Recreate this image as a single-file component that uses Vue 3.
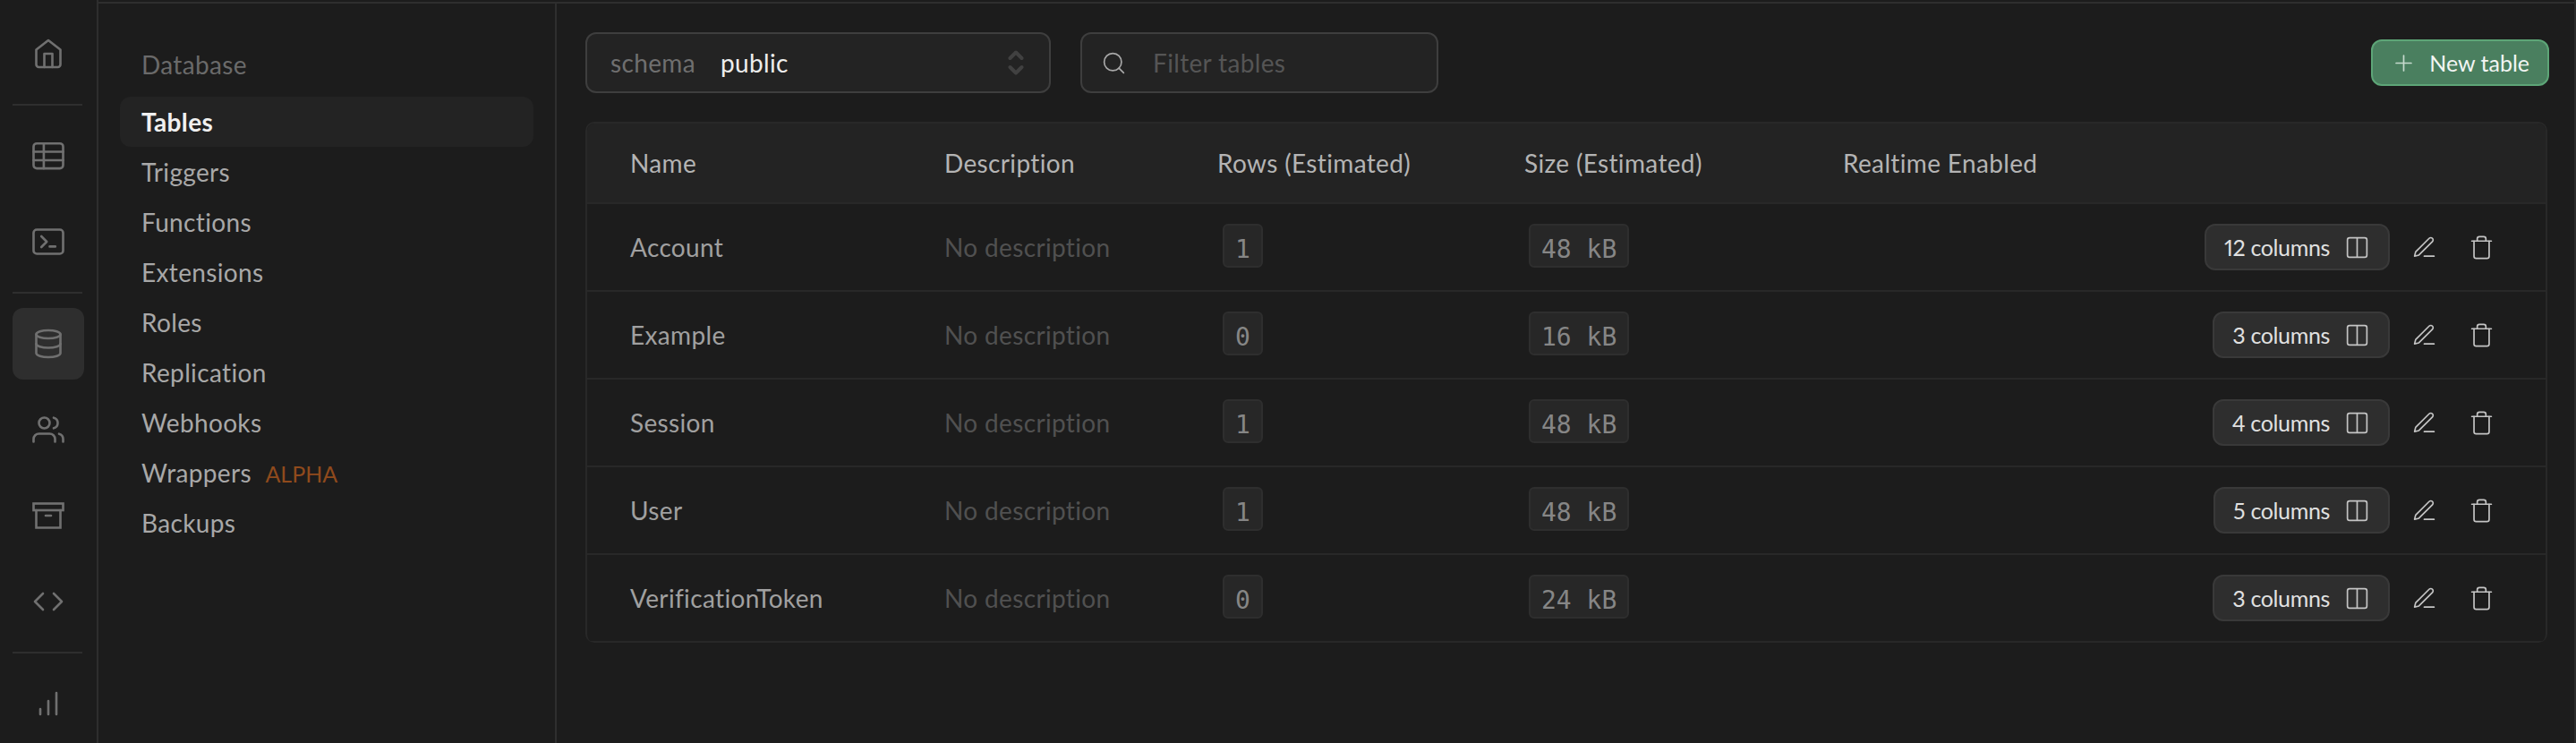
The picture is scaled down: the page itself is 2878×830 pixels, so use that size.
<script setup>
const menu = ["Triggers", "Functions", "Extensions", "Roles", "Replication", "Webhooks"]

const tables = [
  { name: "Account", rows: "1", size: "48 kB", columns: "12 columns" },
  { name: "Example", rows: "0", size: "16 kB", columns: "3 columns" },
  { name: "Session", rows: "1", size: "48 kB", columns: "4 columns" },
  { name: "User", rows: "1", size: "48 kB", columns: "5 columns" },
  { name: "VerificationToken", rows: "0", size: "24 kB", columns: "3 columns" }
]
</script>

<template>
  <div class="page">
    <nav class="rail">
      <a class="rail-item">
        <svg viewBox="0 0 24 24"><path d="M3 9l9-7 9 7v11a2 2 0 0 1-2 2H5a2 2 0 0 1-2-2z" /><path d="M9 22V12h6v10" /></svg>
      </a>
      <div class="rail-line"></div>
      <a class="rail-item">
        <svg viewBox="0 0 24 24"><rect x="1" y="2.8" width="22" height="18.6" rx="2.4" /><path d="M1 9h22M1 15.3h22M8.6 2.8v18.6" /></svg>
      </a>
      <a class="rail-item">
        <svg viewBox="0 0 24 24"><rect x="1" y="3" width="22" height="18" rx="2.4" /><path d="M6.8 8l4 4-4 4M13 15.6h4.2" /></svg>
      </a>
      <div class="rail-line"></div>
      <a class="rail-item active">
        <svg viewBox="0 0 24 24"><ellipse cx="12" cy="5" rx="9" ry="3" /><path d="M21 12c0 1.66-4 3-9 3s-9-1.34-9-3" /><path d="M3 5v14c0 1.66 4 3 9 3s9-1.34 9-3V5" /></svg>
      </a>
      <a class="rail-item">
        <svg viewBox="0 0 24 24"><path d="M17 21v-2a4 4 0 0 0-4-4H5a4 4 0 0 0-4 4v2" /><circle cx="9" cy="7" r="4" /><path d="M23 21v-2a4 4 0 0 0-3-3.87" /><path d="M16 3.13a4 4 0 0 1 0 7.75" /></svg>
      </a>
      <a class="rail-item">
        <svg class="sharp" viewBox="0 0 24 24"><path d="M21 8v13H3V8" /><rect x="1" y="3" width="22" height="5" /><path d="M10 12h4" /></svg>
      </a>
      <a class="rail-item">
        <svg viewBox="0 0 24 24"><path d="M16 18l6-6-6-6" /><path d="M8 6l-6 6 6 6" /></svg>
      </a>
      <div class="rail-line"></div>
      <a class="rail-item">
        <svg viewBox="0 0 24 24"><path d="M12 20V10M18 20V4M6 20v-4" /></svg>
      </a>
    </nav>

    <div class="content">
      <aside class="sidebar">
        <div class="side-title">Database</div>
        <a class="side-item current">Tables</a>
        <a v-for="item in menu" :key="item" class="side-item">{{ item }}</a>
        <a class="side-item">Wrappers <span class="alpha">ALPHA</span></a>
        <a class="side-item">Backups</a>
      </aside>

      <main class="main">
        <div class="toolbar">
          <div class="select">
            <span class="select-label">schema</span>
            <span class="select-value">public</span>
            <svg class="chevrons" viewBox="0 0 18 30"><path d="M2.5 10l6.5-6.5 6.5 6.5M2.5 20l6.5 6.5 6.5-6.5" /></svg>
          </div>
          <div class="filter">
            <svg class="icon search" viewBox="0 0 24 24"><circle cx="11" cy="11" r="8" /><path d="M21 21l-4.35-4.35" /></svg>
            <span>Filter tables</span>
          </div>
          <button class="new-table">
            <svg class="icon" viewBox="0 0 24 24"><path d="M12 5v14M5 12h14" /></svg>
            New table
          </button>
        </div>

        <div class="table">
          <div class="row head">
            <div>Name</div>
            <div>Description</div>
            <div>Rows (Estimated)</div>
            <div>Size (Estimated)</div>
            <div>Realtime Enabled</div>
            <div></div>
          </div>
          <div v-for="t in tables" :key="t.name" class="row">
            <div class="name">{{ t.name }}</div>
            <div class="desc">No description</div>
            <div class="rows-cell"><code class="badge">{{ t.rows }}</code></div>
            <div><code class="badge">{{ t.size }}</code></div>
            <div></div>
            <div class="actions">
              <button class="columns">
                {{ t.columns }}
                <svg class="icon" viewBox="0 0 24 24"><path d="M12 3h7a2 2 0 0 1 2 2v14a2 2 0 0 1-2 2h-7m0-18H5a2 2 0 0 0-2 2v14a2 2 0 0 0 2 2h7m0-18v18" /></svg>
              </button>
              <button class="icon-btn">
                <svg class="icon" viewBox="0 0 24 24"><path d="M12 20h9" /><path d="M16.5 3.5a2.121 2.121 0 0 1 3 3L7 19l-4 1 1-4L16.5 3.5z" /></svg>
              </button>
              <button class="icon-btn">
                <svg class="icon" viewBox="0 0 24 24"><path d="M3 6h18" /><path d="M19 6v14a2 2 0 0 1-2 2H7a2 2 0 0 1-2-2V6m3 0V4a2 2 0 0 1 2-2h4a2 2 0 0 1 2 2v2" /></svg>
              </button>
            </div>
          </div>
        </div>
      </main>
    </div>
  </div>
</template>

<style>
body {
  background: #1c1c1c;
}
</style>

<style scoped>
.page {
  display: flex;
  width: 2878px;
  height: 830px;
  overflow: hidden;
  background: #1c1c1c;
  font-family: Lato, "Open Sans", sans-serif;
  font-size: 28px;
  letter-spacing: 0.35px;
  font-variant-numeric: proportional-nums;
  color: #a8a8a8;
  box-sizing: border-box;
  border-right: 2px solid #2b2b2b;
}

.rail {
  flex: none;
  display: flex;
  flex-direction: column;
  align-items: flex-start;
  width: 94px;
  padding: 20px 0 0 14px;
  border-right: 2px solid #2e2e2e;
}

.rail-item {
  flex: none;
  display: flex;
  align-items: center;
  justify-content: center;
  width: 80px;
  height: 80px;
  border-radius: 12px;
  margin-bottom: 16px;
}

.rail-item.active {
  background: #2e2e2e;
}

.rail-item svg {
  width: 36px;
  height: 36px;
  fill: none;
  stroke: #707070;
  stroke-width: 1.75;
  stroke-linecap: round;
  stroke-linejoin: round;
}

.rail-item svg.sharp {
  stroke-linejoin: miter;
}

.rail-line {
  flex: none;
  width: 78px;
  height: 2px;
  margin-bottom: 16px;
  background: #2e2e2e;
}

.content {
  flex: 1;
  display: flex;
  margin-top: 2px;
  border-top: 2px solid #2e2e2e;
  min-width: 0;
}

.sidebar {
  flex: none;
  width: 512px;
  padding: 41px 0 0 24px;
  box-sizing: border-box;
  border-right: 2px solid #2e2e2e;
}

.side-title {
  height: 56px;
  line-height: 54px;
  margin-bottom: 7px;
  padding-left: 24px;
  color: #6a6a6a;
}

.side-item {
  display: block;
  width: 462px;
  height: 56px;
  line-height: 56px;
  padding-left: 24px;
  box-sizing: border-box;
  border-radius: 12px;
}

.side-item.current {
  background: #232323;
  color: #f0f0f0;
  font-weight: 700;
}

.alpha {
  margin-left: 8px;
  font-size: 25px;
  letter-spacing: 0;
  color: #8f4a1c;
}

.main {
  flex: 1;
  min-width: 0;
  padding: 32px 28px 0 32px;
}

.toolbar {
  display: flex;
  align-items: center;
  gap: 33px;
}

.select,
.filter {
  display: flex;
  align-items: center;
  height: 68px;
  box-sizing: border-box;
  background: #232323;
  border: 2px solid #3e3e3e;
  border-radius: 12px;
}

.select {
  position: relative;
  width: 520px;
  padding-left: 26px;
}

.select-label {
  color: #6f6f6f;
}

.select-value {
  margin-left: 28px;
  color: #ededed;
}

.chevrons {
  position: absolute;
  right: 28px;
  top: 17px;
  width: 18px;
  height: 30px;
  fill: none;
  stroke: #414141;
  stroke-width: 4;
  stroke-linecap: round;
  stroke-linejoin: round;
}

.filter {
  width: 400px;
  padding-left: 21px;
  color: #555555;
}

.icon {
  flex: none;
  width: 29px;
  height: 29px;
  fill: none;
  stroke: #c4c4c4;
  stroke-width: 1.4;
  stroke-linecap: round;
  stroke-linejoin: round;
}

.search {
  margin-right: 29px;
  stroke: #a8a8a8;
}

.new-table {
  display: flex;
  align-items: center;
  gap: 14px;
  height: 52px;
  margin-left: auto;
  padding: 0 20px 0 20px;
  box-sizing: border-box;
  background: #4a7f5f;
  border: 2px solid #5da577;
  border-radius: 12px;
  color: #f2f5f3;
  font: inherit;
  font-size: 25px;
  letter-spacing: 0;
}

.new-table .icon {
  stroke: #c6dacd;
}

.table {
  margin: 32px 2px 0 0;
  border: 2px solid #282828;
  border-bottom: 0;
  border-radius: 10px;
  overflow: hidden;
}

.row {
  display: grid;
  grid-template-columns: 351px 305px 343px 356px 1fr auto;
  align-items: center;
  height: 98px;
  padding: 0 46px 0 48px;
  box-sizing: border-box;
  border-bottom: 2px solid #282828;
}

.row.head {
  height: 90px;
  background: #232323;
  color: #b4b4b4;
}

.name {
  color: #a0a0a0;
}

.desc {
  color: #505050;
}

.badge {
  display: inline-block;
  height: 49px;
  line-height: 45px;
  margin: 0 0 4px 5px;
  padding: 4px 12px 0;
  box-sizing: border-box;
  background: #272727;
  border: 2px solid #2e2e2e;
  border-radius: 6px;
  font-family: "DejaVu Sans Mono", monospace;
  font-size: 28px;
  letter-spacing: 0;
  color: #868686;
  vertical-align: middle;
}

.rows-cell .badge {
  margin-left: 6px;
}

.actions {
  display: flex;
  align-items: center;
  gap: 12px;
}

.columns {
  display: flex;
  align-items: center;
  gap: 16px;
  height: 52px;
  padding: 0 20px;
  box-sizing: border-box;
  background: #2e2e2e;
  border: 2px solid #393939;
  border-radius: 12px;
  color: #e0e0e0;
  font: inherit;
  font-size: 25px;
  letter-spacing: -0.35px;
}

.icon-btn {
  display: flex;
  align-items: center;
  justify-content: center;
  width: 52px;
  height: 52px;
  padding: 0;
  background: none;
  border: 0;
}
</style>
